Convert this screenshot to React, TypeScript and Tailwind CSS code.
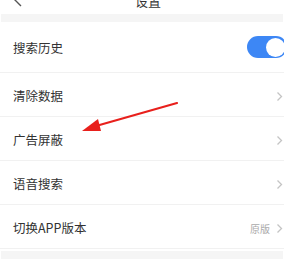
import React from 'react';

const Chevron = () => (
  <svg width="7" height="11" viewBox="0 0 7 11" className="shrink-0">
    <path d="M1.5 1.5 L5.5 5.5 L1.5 9.5" fill="none" stroke="#c4c4c4" strokeWidth="1.3" />
  </svg>
);

const Row = ({ label, right, first }: { label: string; right?: React.ReactNode; first?: boolean }) => (
  <div className={`flex items-center justify-between pl-[13px] pr-[1px] pt-[3px] border-b border-[#f1f1f1] ${first ? 'h-[51px]' : 'h-[44px]'}`}>
    <span className="text-[12.5px] text-[#333]">{label}</span>
    {right}
  </div>
);

export default function App() {
  return (
    <div
      className="relative w-[284px] h-[263px] overflow-hidden bg-white"
      style={{ fontFamily: '"Noto Sans CJK SC", "Noto Sans", sans-serif' }}
    >
      {/* header (cut off) */}
      <div className="h-[14px] overflow-hidden">
        <div className="-mt-[11px] h-[24px] flex items-center justify-center relative">
          <svg width="10" height="14" viewBox="0 0 10 14" className="absolute left-[13px] top-[4px]">
            <path d="M8 1 L2 7 L8 13" fill="none" stroke="#555" strokeWidth="1.4" />
          </svg>
          <span className="text-[13px] text-[#333] ml-[12px]">设置</span>
        </div>
      </div>
      <div className="h-[8px] bg-[#f5f5f5] mx-[1px]" />

      <Row
        first
        label="搜索历史"
        right={
          <div className="w-[40px] h-[22px] -mt-[3px] rounded-full bg-[#3d87f5] flex items-center justify-end pr-[2px] -mr-[4px]">
            <div className="w-[19px] h-[19px] rounded-full bg-white" />
          </div>
        }
      />
      <Row label="清除数据" right={<Chevron />} />
      <Row label="广告屏蔽" right={<Chevron />} />
      <Row label="语音搜索" right={<Chevron />} />
      <Row
        label="切换APP版本"
        right={
          <div className="flex items-center gap-[6px]">
            <span className="text-[10px] text-[#aaa]">原版</span>
            <Chevron />
          </div>
        }
      />
      <div className="h-[2px]" />
      <div className="h-[8px] bg-[#f5f5f5] mx-[1px]" />

      {/* red annotation arrow */}
      <svg className="absolute left-0 top-0" width="284" height="263" viewBox="0 0 284 263">
        <line x1="177" y1="103" x2="96" y2="126" stroke="#e8201c" strokeWidth="2.2" strokeLinecap="round" />
        <polygon points="82,131 98,119 101,131" fill="#e8201c" />
      </svg>
    </div>
  );
}
